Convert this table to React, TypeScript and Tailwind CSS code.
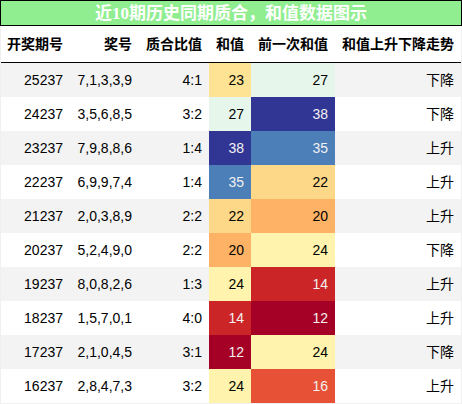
import React from "react";

type Row = {
  id: string;
  nums: string;
  ratio: string;
  sum: number;
  prev: number;
  trend: string;
};

const rows: Row[] = [
  { id: "25237", nums: "7,1,3,3,9", ratio: "4:1", sum: 23, prev: 27, trend: "下降" },
  { id: "24237", nums: "3,5,6,8,5", ratio: "3:2", sum: 27, prev: 38, trend: "下降" },
  { id: "23237", nums: "7,9,8,8,6", ratio: "1:4", sum: 38, prev: 35, trend: "上升" },
  { id: "22237", nums: "6,9,9,7,4", ratio: "1:4", sum: 35, prev: 22, trend: "上升" },
  { id: "21237", nums: "2,0,3,8,9", ratio: "2:2", sum: 22, prev: 20, trend: "上升" },
  { id: "20237", nums: "5,2,4,9,0", ratio: "2:2", sum: 20, prev: 24, trend: "下降" },
  { id: "19237", nums: "8,0,8,2,6", ratio: "1:3", sum: 24, prev: 14, trend: "上升" },
  { id: "18237", nums: "1,5,7,0,1", ratio: "4:0", sum: 14, prev: 12, trend: "上升" },
  { id: "17237", nums: "2,1,0,4,5", ratio: "3:1", sum: 12, prev: 24, trend: "下降" },
  { id: "16237", nums: "2,8,4,7,3", ratio: "3:2", sum: 24, prev: 16, trend: "上升" },
];

const cellColor: Record<number, { bg: string; fg: string }> = {
  12: { bg: "#a50026", fg: "#f1f1f1" },
  14: { bg: "#cc2527", fg: "#f1f1f1" },
  16: { bg: "#e75136", fg: "#f1f1f1" },
  20: { bg: "#fdb265", fg: "#000000" },
  22: { bg: "#fed889", fg: "#000000" },
  23: { bg: "#fee394", fg: "#000000" },
  24: { bg: "#fff3ad", fg: "#000000" },
  27: { bg: "#e7f6eb", fg: "#000000" },
  35: { bg: "#4c7eb8", fg: "#f1f1f1" },
  38: { bg: "#313695", fg: "#f1f1f1" },
};

const grid = "grid grid-cols-[69px_69px_70px_42px_84px_126px]";
const cell = "flex items-center justify-end px-[7px] whitespace-nowrap";

export default function App() {
  return (
    <div
      className="w-[462px] h-[404px] bg-[#f0f0f0] overflow-hidden text-[14px] text-black"
      style={{ fontFamily: '"Liberation Sans", "Noto Sans CJK SC", sans-serif' }}
    >
      <div
        className="h-[26px] border border-black bg-[#90ee90] flex items-center justify-center text-white font-bold text-[17px] leading-none"
        style={{ fontFamily: '"Liberation Serif", "Noto Sans CJK SC", serif' }}
      >
        近10期历史同期质合，和值数据图示
      </div>
      <div className="mx-px bg-white">
        <div className={`${grid} h-[37px] border-b border-black font-bold bg-white`}>
          <div className={cell}>开奖期号</div>
          <div className={cell}>奖号</div>
          <div className={cell}>质合比值</div>
          <div className={cell}>和值</div>
          <div className={cell}>前一次和值</div>
          <div className={cell}>和值上升下降走势</div>
        </div>
        {rows.map((r, i) => {
          const s = cellColor[r.sum];
          const p = cellColor[r.prev];
          return (
            <div
              key={r.id}
              className={`${grid} h-[34px] ${i % 2 === 0 ? "bg-[#f3f3f3]" : "bg-white"}`}
            >
              <div className={cell}>{r.id}</div>
              <div className={cell}>{r.nums}</div>
              <div className={cell}>{r.ratio}</div>
              <div className={cell} style={{ backgroundColor: s.bg, color: s.fg }}>
                {r.sum}
              </div>
              <div className={cell} style={{ backgroundColor: p.bg, color: p.fg }}>
                {r.prev}
              </div>
              <div className={cell}>{r.trend}</div>
            </div>
          );
        })}
      </div>
    </div>
  );
}
